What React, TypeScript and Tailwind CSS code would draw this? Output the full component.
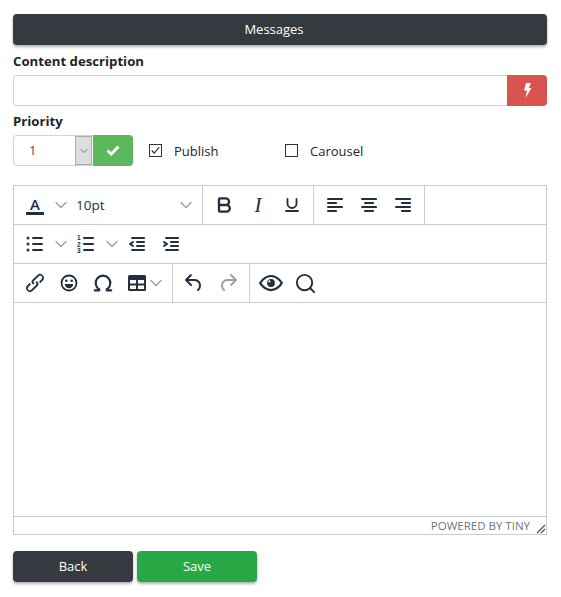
import type { ReactNode } from 'react';
import { Bold, ChevronDown, Omega, Search, Underline } from 'lucide-react';

function Chevron({ className = 'text-[#9aa1a9]' }: { className?: string }) {
  return (
    <div className="w-[17px] shrink-0 flex justify-center">
      <ChevronDown className={`w-[20px] h-[20px] shrink-0 ${className}`} strokeWidth={1.7} />
    </div>
  );
}

function ToolButton({ children }: { children: ReactNode }) {
  return <div className="w-[34px] h-[34px] flex items-center justify-center text-[#222f3e]">{children}</div>;
}

function SplitButton({ children }: { children: ReactNode }) {
  return (
    <div className="w-[51px] h-[34px] flex items-center text-[#222f3e]">
      <div className="w-[34px] flex justify-center">{children}</div>
      <Chevron />
    </div>
  );
}

function Group({ children, border = true }: { children: ReactNode; border?: boolean }) {
  return <div className={`flex items-center h-full px-[4px] ${border ? 'border-r border-[#ccc]' : ''}`}>{children}</div>;
}

function Row({ children }: { children: ReactNode }) {
  return <div className="flex h-[39px] border-b border-[#ccc]">{children}</div>;
}

function PathIcon({ d, className = '' }: { d: string; className?: string }) {
  return (
    <svg viewBox="0 0 24 24" className={`w-6 h-6 ${className}`} fill="currentColor">
      <path d={d} />
    </svg>
  );
}

const alignLeft =
  'M5 5h14c.6 0 1 .4 1 1s-.4 1-1 1H5a1 1 0 110-2zm0 4h8c.6 0 1 .4 1 1s-.4 1-1 1H5a1 1 0 110-2zm0 8h8c.6 0 1 .4 1 1s-.4 1-1 1H5a1 1 0 010-2zm0-4h14c.6 0 1 .4 1 1s-.4 1-1 1H5a1 1 0 010-2z';
const alignCenter =
  'M5 5h14c.6 0 1 .4 1 1s-.4 1-1 1H5a1 1 0 110-2zm3 4h8c.6 0 1 .4 1 1s-.4 1-1 1H8a1 1 0 110-2zm0 8h8c.6 0 1 .4 1 1s-.4 1-1 1H8a1 1 0 010-2zm-3-4h14c.6 0 1 .4 1 1s-.4 1-1 1H5a1 1 0 010-2z';
const alignRight =
  'M5 5h14c.6 0 1 .4 1 1s-.4 1-1 1H5a1 1 0 110-2zm6 4h8c.6 0 1 .4 1 1s-.4 1-1 1h-8a1 1 0 010-2zm0 8h8c.6 0 1 .4 1 1s-.4 1-1 1h-8a1 1 0 010-2zm-6-4h14c.6 0 1 .4 1 1s-.4 1-1 1H5a1 1 0 010-2z';
const outdent =
  'M7 5h12c.6 0 1 .4 1 1s-.4 1-1 1H7a1 1 0 110-2zm5 4h7c.6 0 1 .4 1 1s-.4 1-1 1h-7a1 1 0 010-2zm0 4h7c.6 0 1 .4 1 1s-.4 1-1 1h-7a1 1 0 010-2zm-5 4h12a1 1 0 010 2H7a1 1 0 010-2zm1.600-3.800a1 1 0 01-1.200 1.600l-3-2a1 1 0 010-1.600l3-2a1 1 0 011.200 1.600L6.800 12l1.800 1.200z';
const indent =
  'M7 5h12c.6 0 1 .4 1 1s-.4 1-1 1H7a1 1 0 110-2zm5 4h7c.6 0 1 .4 1 1s-.4 1-1 1h-7a1 1 0 010-2zm0 4h7c.6 0 1 .4 1 1s-.4 1-1 1h-7a1 1 0 010-2zm-5 4h12a1 1 0 010 2H7a1 1 0 010-2zm-2.600-3.800L6.200 12l-1.800-1.200a1 1 0 011.200-1.600l3 2a1 1 0 010 1.600l-3 2a1 1 0 11-1.200-1.600z';
const link =
  'M6.200 12.300a1 1 0 011.400 1.400l-2 2a2 2 0 102.800 2.800l4.800-4.800a1 1 0 000-1.400 1 1 0 111.400-1.300 2.900 2.900 0 010 4L9.600 20a3.900 3.900 0 01-5.500-5.500l2-2zm11.600-.6a1 1 0 01-1.400-1.400l2-2a2 2 0 10-2.800-2.800L10.800 10a1 1 0 000 1.400 1 1 0 11-1.400 1.300 2.900 2.900 0 010-4L14.400 4a3.900 3.900 0 015.500 5.500l-2 2z';
const undo =
  'M6.400 8H12c3.700 0 6.200 2 6.800 5.100.6 2.700-.4 5.600-2.300 6.800a1 1 0 01-1-1.800c1.100-.6 1.800-2.700 1.400-4.600-.5-2.100-2.100-3.500-4.900-3.500H6.400l3.300 3.300a1 1 0 11-1.400 1.400l-5-5a1 1 0 010-1.400l5-5a1 1 0 011.400 1.400L6.400 8z';
const redo =
  'M17.600 10H12c-2.800 0-4.400 1.400-4.900 3.500-.4 2 .3 4 1.400 4.600a1 1 0 11-1 1.800c-2-1.200-2.900-4.100-2.300-6.800.6-3 3-5.100 6.800-5.100h5.600l-3.300-3.300a1 1 0 111.400-1.400l5 5a1 1 0 010 1.400l-5 5a1 1 0 01-1.400-1.400l3.300-3.300z';

function BulletListIcon() {
  return (
    <svg viewBox="0 0 24 24" className="w-6 h-6" fill="currentColor">
      <circle cx="5" cy="6" r="1.5" />
      <circle cx="5" cy="12" r="1.5" />
      <circle cx="5" cy="18" r="1.5" />
      <rect x="9" y="5" width="11" height="2" rx="1" />
      <rect x="9" y="11" width="11" height="2" rx="1" />
      <rect x="9" y="17" width="11" height="2" rx="1" />
    </svg>
  );
}

function NumberedListIcon() {
  return (
    <svg viewBox="0 0 24 24" className="w-6 h-6" fill="currentColor">
      <text x="3" y="8" fontSize="6.5" fontWeight="700" fontFamily="'Liberation Sans', sans-serif">1</text>
      <text x="3" y="14.500" fontSize="6.5" fontWeight="700" fontFamily="'Liberation Sans', sans-serif">2</text>
      <text x="3" y="21" fontSize="6.5" fontWeight="700" fontFamily="'Liberation Sans', sans-serif">3</text>
      <rect x="9" y="5" width="11" height="2" rx="1" />
      <rect x="9" y="11" width="11" height="2" rx="1" />
      <rect x="9" y="17" width="11" height="2" rx="1" />
    </svg>
  );
}

function EmojiIcon() {
  return (
    <svg viewBox="0 0 24 24" className="w-6 h-6">
      <circle cx="12" cy="12" r="7.500" fill="none" stroke="currentColor" strokeWidth="1.800" />
      <circle cx="9.300" cy="9.800" r="1.300" fill="currentColor" />
      <circle cx="14.700" cy="9.800" r="1.300" fill="currentColor" />
      <path d="M7.800 13h8.400a4.200 4.200 0 01-8.400 0z" fill="currentColor" />
    </svg>
  );
}

function EyeIcon() {
  return (
    <svg viewBox="0 0 24 24" className="w-[26px] h-[26px] shrink-0">
      <path d="M2 12s3.600-6.500 10-6.500S22 12 22 12s-3.600 6.500-10 6.500S2 12 2 12z" fill="none" stroke="currentColor" strokeWidth="2" />
      <circle cx="12" cy="12" r="3.600" fill="currentColor" />
      <circle cx="10.500" cy="10.500" r="1" fill="white" />
    </svg>
  );
}

function TableIcon() {
  return (
    <svg viewBox="0 0 24 24" className="w-6 h-6" fill="currentColor">
      <path
        fillRule="evenodd"
        d="M3 5.500A1.500 1.500 0 014.500 4h15A1.500 1.500 0 0121 5.500v13a1.500 1.500 0 01-1.500 1.500h-15A1.500 1.500 0 013 18.500v-13zM5 9v3.500h6V9H5zm8 0v3.500h6V9h-6zm-8 5.500V18h6v-3.500H5zm8 0V18h6v-3.500h-6z"
      />
    </svg>
  );
}

function Check({ label, checked, className = '' }: { label: string; checked?: boolean; className?: string }) {
  return (
    <div className={`flex items-center ${className}`}>
      <div className="w-[13px] h-[13px] border border-[#333] bg-white flex items-center justify-center">
        {checked && (
          <svg viewBox="0 0 13 13" className="w-[11px] h-[11px] text-[#333]" fill="none" stroke="currentColor" strokeWidth="1.4">
            <path d="M2 6.500l3 3 6-7" />
          </svg>
        )}
      </div>
      <span className="ml-[12px] pt-px leading-5 text-[#212529]">{label}</span>
    </div>
  );
}

export default function App() {
  return (
    <div className="pt-[14px] px-[13px] w-[561px] h-[597px] bg-white text-[#212529] font-['Open_Sans',sans-serif] text-[13px]">
      <div className="w-[534px]">
        <div className="h-[31px] pt-px pr-[12px] rounded-[4px] bg-[#343a40] text-white flex items-center justify-center shadow-[0_2px_3px_rgba(0,0,0,0.3)]">
          Messages
        </div>

        <div className="mt-[6px] h-[20px] leading-5 font-bold text-[13.2px]">Content description</div>
        <div className="mt-[4px] flex h-[31px]">
          <div className="flex-1 border border-[#ced4da] border-r-0 rounded-l-[4px] bg-white" />
          <div className="w-[40px] bg-[#d9534f] rounded-r-[4px] text-white flex items-center justify-center">
            <svg viewBox="0 0 9 15" className="w-[9px] h-[15px]" fill="currentColor">
              <path d="M3 0h5L5.700 5H8.500L2.500 15l1.500-7.500H1z" />
            </svg>
          </div>
        </div>

        <div className="mt-[5px] h-[20px] leading-5 font-bold text-[13.2px]">Priority</div>
        <div className="mt-[4px] flex items-center h-[31px]">
          <div className="w-[80px] h-full flex items-center justify-between border border-[#ced4da] border-r-0 rounded-l-[4px] pl-[15px] pr-px text-[#495057]">
            <span>1</span>
            <div className="w-[17px] h-[29px] bg-[#dedede] border border-[#ababab] flex items-center justify-center">
              <ChevronDown className="w-[12px] h-[12px] text-[#444]" strokeWidth={1.5} />
            </div>
          </div>
          <div className="w-[40px] h-full bg-[#5cb85c] rounded-r-[4px] text-white flex items-center justify-center">
            <svg viewBox="0 0 14 11" className="w-[14px] h-[11px]" fill="none" stroke="currentColor" strokeWidth="3">
              <path d="M1.500 5.500l3.800 3.500 7.200-7.500" />
            </svg>
          </div>
          <Check label="Publish" checked className="ml-[16px] w-[136px]" />
          <Check label="Carousel" />
        </div>

        <div className="mt-[19px] h-[350px] border border-[#ccc] flex flex-col">
          <Row>
            <Group>
              <ToolButton>
                <div className="flex flex-col items-center">
                  <span className="text-[15px] leading-[16px] font-semibold">A</span>
                  <div className="w-[18px] h-[3px] bg-[#222f3e]" />
                </div>
              </ToolButton>
              <Chevron />
              <div className="w-[129px] pl-[7px] pr-[4px] flex items-center justify-between text-[13.5px] text-[#222f3e]">
                <span>10pt</span>
                <Chevron />
              </div>
            </Group>
            <Group>
              <ToolButton>
                <Bold className="w-[20px] h-[20px]" strokeWidth={2.8} />
              </ToolButton>
              <ToolButton>
                <span className="font-['Liberation_Serif',serif] italic text-[21px] leading-none">I</span>
              </ToolButton>
              <ToolButton>
                <Underline className="w-[18px] h-[18px]" strokeWidth={2.4} />
              </ToolButton>
            </Group>
            <Group>
              <ToolButton>
                <PathIcon d={alignLeft} />
              </ToolButton>
              <ToolButton>
                <PathIcon d={alignCenter} />
              </ToolButton>
              <ToolButton>
                <PathIcon d={alignRight} />
              </ToolButton>
            </Group>
          </Row>
          <Row>
            <Group border={false}>
              <SplitButton>
                <BulletListIcon />
              </SplitButton>
              <SplitButton>
                <NumberedListIcon />
              </SplitButton>
              <ToolButton>
                <PathIcon d={outdent} />
              </ToolButton>
              <ToolButton>
                <PathIcon d={indent} />
              </ToolButton>
            </Group>
          </Row>
          <Row>
            <Group>
              <ToolButton>
                <PathIcon d={link} />
              </ToolButton>
              <ToolButton>
                <EmojiIcon />
              </ToolButton>
              <ToolButton>
                <Omega className="w-[22px] h-[22px]" strokeWidth={2.3} />
              </ToolButton>
              <div className="w-[48px] h-[34px] flex items-center text-[#222f3e] pl-[5px]">
                <TableIcon />
                <div className="-ml-[2px]">
                  <Chevron />
                </div>
              </div>
            </Group>
            <Group>
              <ToolButton>
                <PathIcon d={undo} />
              </ToolButton>
              <ToolButton>
                <PathIcon d={redo} className="text-[#9aa1a9]" />
              </ToolButton>
            </Group>
            <Group border={false}>
              <ToolButton>
                <EyeIcon />
              </ToolButton>
              <ToolButton>
                <Search className="w-[23px] h-[23px]" strokeWidth={2} />
              </ToolButton>
            </Group>
          </Row>
          <div className="flex-1" />
          <div className="relative h-[18px] border-t border-[#ccc] pr-[16px] flex items-center justify-end text-[11.5px] text-[#222f3eb3]">
            POWERED BY TINY
            <svg viewBox="0 0 10 10" className="absolute right-0 bottom-0 w-[10px] h-[10px] text-[#555]" fill="none" stroke="currentColor" strokeWidth="1.2">
              <path d="M1 9l8-8M5 9l4-4" />
            </svg>
          </div>
        </div>

        <div className="mt-[16px] flex gap-[4px]">
          <div className="w-[120px] h-[31px] pt-px rounded-[4px] bg-[#343a40] text-white flex items-center justify-center shadow-[0_2px_3px_rgba(0,0,0,0.3)]">
            Back
          </div>
          <div className="w-[120px] h-[31px] pt-px rounded-[4px] bg-[#28a745] text-white flex items-center justify-center shadow-[0_2px_3px_rgba(0,0,0,0.3)]">
            Save
          </div>
        </div>
      </div>
    </div>
  );
}
